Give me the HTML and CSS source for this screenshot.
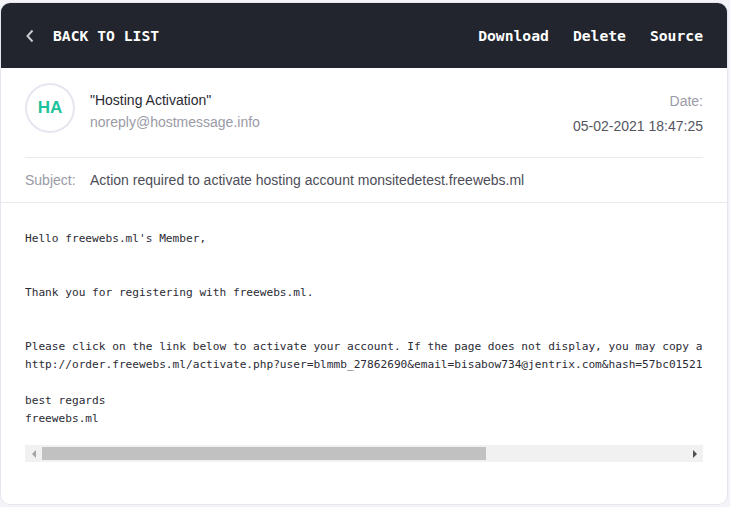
FILE: index.html
```html
<!DOCTYPE html>
<html>
<head>
<meta charset="utf-8">
<link rel="stylesheet" href="styles.css">
</head>
<body>
<div class="card">
  <div class="topbar">
    <a class="back">
      <svg class="chev" width="8" height="14" viewBox="0 0 8 14"><polyline points="6.5,1.5 1.5,7 6.5,12.5" fill="none" stroke="#c9cacf" stroke-width="2"/></svg>
      <span>BACK TO LIST</span>
    </a>
    <nav class="actions">
      <a>Download</a>
      <a>Delete</a>
      <a>Source</a>
    </nav>
  </div>
  <div class="meta">
    <div class="from-row">
      <div class="sender">
        <div class="avatar">HA</div>
        <div class="names">
          <div class="name">"Hosting Activation"</div>
          <div class="email">noreply@hostmessage.info</div>
        </div>
      </div>
      <div class="date">
        <div class="date-label">Date:</div>
        <div class="date-value">05-02-2021 18:47:25</div>
      </div>
    </div>
    <div class="subject-row">
      <span class="subject-label">Subject:</span>
      <span class="subject-value">Action required to activate hosting account monsitedetest.freewebs.ml</span>
    </div>
  </div>
  <div class="body">
<pre class="message">Hello freewebs.ml's Member,


Thank you for registering with freewebs.ml.


Please click on the link below to activate your account. If the page does not display, you may copy a
http://order.freewebs.ml/activate.php?user=blmmb_27862690&amp;email=bisabow734@jentrix.com&amp;hash=57bc01521

best regards
freewebs.ml</pre>
    <div class="scrollbar">
      <div class="sb-btn"><span class="tri-left"></span></div>
      <div class="sb-track"><div class="sb-thumb"></div></div>
      <div class="sb-btn"><span class="tri-right"></span></div>
    </div>
  </div>
</div>
</body>
</html>
```
FILE: styles.css
```css
html, body {
  margin: 0;
  padding: 0;
  background: #f4f4f8;
}
body {
  padding-top: 2px;
  font-family: "Liberation Sans", Arial, sans-serif;
}
.card {
  width: 728px;
  height: 503px;
  box-sizing: border-box;
  background: #ffffff;
  border: 1px solid #e6e6ee;
  border-radius: 10px;
  overflow: hidden;
}
.topbar {
  height: 66px;
  margin: -1px -1px 0 -1px;
  background: #22252d;
  display: flex;
  align-items: center;
  justify-content: space-between;
  padding: 1px 25px 0 26px;
  box-sizing: border-box;
  font-family: "DejaVu Sans Mono", monospace;
  font-weight: bold;
  font-size: 14.7px;
  color: #ffffff;
}
.back {
  display: flex;
  align-items: center;
  gap: 19px;
}
.chev {
  display: block;
}
.actions {
  display: flex;
  gap: 24px;
}
.meta {
  padding: 15px 24px 0 24px;
}
.from-row {
  height: 74px;
  border-bottom: 1px solid #e8e8ee;
  display: flex;
  justify-content: space-between;
  align-items: flex-start;
}
.sender {
  display: flex;
  align-items: flex-start;
  gap: 15px;
}
.avatar {
  width: 46px;
  height: 46px;
  border: 2px solid #e6e6f0;
  border-radius: 50%;
  display: flex;
  align-items: center;
  justify-content: center;
  color: #1ec39b;
  font-weight: bold;
  font-size: 17px;
}
.names {
  padding-top: 6px;
  font-size: 14px;
  line-height: 22px;
}
.name {
  color: #2a2a33;
}
.email {
  color: #9a9aa6;
}
.date {
  text-align: right;
  padding-top: 7px;
  font-size: 14px;
}
.date-label {
  color: #9a9aa6;
  line-height: 22px;
}
.date-value {
  color: #555560;
  line-height: 22px;
  margin-top: 3px;
}
.subject-row {
  height: 44px;
  display: flex;
  align-items: center;
  font-size: 14px;
}
.subject-label {
  color: #9a9aa6;
  width: 65px;
}
.subject-value {
  color: #4d4d58;
}
.body {
  border-top: 1px solid #e8e8ee;
  padding: 27px 24px 0 24px;
}
.message {
  margin: 0;
  font-family: "DejaVu Sans Mono", monospace;
  font-size: 11.15px;
  line-height: 18px;
  color: #2b2b35;
  overflow: hidden;
  white-space: pre;
}
.scrollbar {
  margin-top: 17px;
  height: 17px;
  display: flex;
  background: #f1f1f1;
}
.sb-btn {
  width: 17px;
  height: 17px;
  display: flex;
  align-items: center;
  justify-content: center;
}
.sb-track {
  flex: 1;
  padding: 2px 0;
}
.sb-thumb {
  width: 444px;
  height: 13px;
  background: #c1c1c1;
}
.tri-left {
  width: 0;
  height: 0;
  border-top: 4px solid transparent;
  border-bottom: 4px solid transparent;
  border-right: 4px solid #a3a3a3;
}
.tri-right {
  width: 0;
  height: 0;
  border-top: 4px solid transparent;
  border-bottom: 4px solid transparent;
  border-left: 4px solid #505050;
}
```
